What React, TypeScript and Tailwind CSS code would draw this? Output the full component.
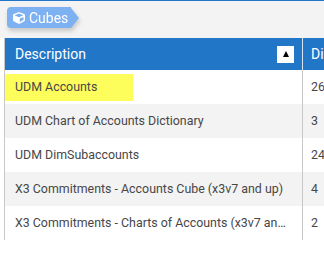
import { FaCube } from "react-icons/fa";

const rows = [
  { name: "UDM Accounts", dims: "26", hl: true },
  { name: "UDM Chart of Accounts Dictionary", dims: "3" },
  { name: "UDM DimSubaccounts", dims: "24" },
  { name: "X3 Commitments - Accounts Cube (x3v7 and up)", dims: "4" },
  { name: "X3 Commitments - Charts of Accounts (x3v7 and up)", dims: "2" },
];

export default function App() {
  return (
    <div
      className="w-[324px] h-[259px] overflow-hidden bg-white"
      style={{ fontFamily: "Roboto, 'Liberation Sans', sans-serif" }}
    >
      {/* top strip */}
      <div className="h-px bg-[#2176c8]" />
      <div className="h-[37px] bg-[#f3f3f3] pl-[7px] pt-[6px]">
        <div className="flex items-center w-fit drop-shadow-[1px_3px_2px_rgba(0,0,0,0.18)]">
          <div className="h-[21px] flex items-center gap-[4px] pl-[6px] pr-[3px] bg-[#7eb1f2] rounded-l-[4px] text-white text-[14px]">
            <FaCube className="w-[12px] h-[12px]" />
            <span className="leading-none">Cubes</span>
          </div>
          <div className="w-0 h-0 border-y-[10.5px] border-y-transparent border-l-[8px] border-l-[#7eb1f2]" />
        </div>
      </div>

      {/* table */}
      <div className="ml-[4px] border-l border-[#c8c8c8] w-[400px]">
        <div className="flex h-[32px] bg-[#2176c8] text-white text-[14px]">
          <div className="w-[298px] shrink-0 flex items-center justify-between pl-[10px] pr-[8px] border-r border-[#d6e4f2]">
            <span>Description</span>
            <div className="w-[17px] h-[17px] bg-white flex items-center justify-center">
              <div className="w-0 h-0 border-x-[3.5px] border-x-transparent border-b-[6px] border-b-black" />
            </div>
          </div>
          <div className="pl-[8px] flex items-center whitespace-nowrap">Dimensions</div>
        </div>
        {rows.map((r, i) => (
          <div
            key={r.name}
            className={`flex h-[34px] text-[12.4px] text-[#474747] ${i % 2 ? "bg-[#f3f3f3]" : "bg-white"}`}
          >
            <div className="w-[298px] shrink-0 flex items-center pr-[10px] border-r border-[#c8c8c8] min-w-0">
              {r.hl ? (
                <span className="bg-[#fdfd5c] h-[27px] w-[128px] flex items-center pl-[10px]">{r.name}</span>
              ) : (
                <span className="pl-[10px] min-w-0 truncate">{r.name}</span>
              )}
            </div>
            <div className="pl-[8px] flex items-center">{r.dims}</div>
          </div>
        ))}
      </div>
    </div>
  );
}
